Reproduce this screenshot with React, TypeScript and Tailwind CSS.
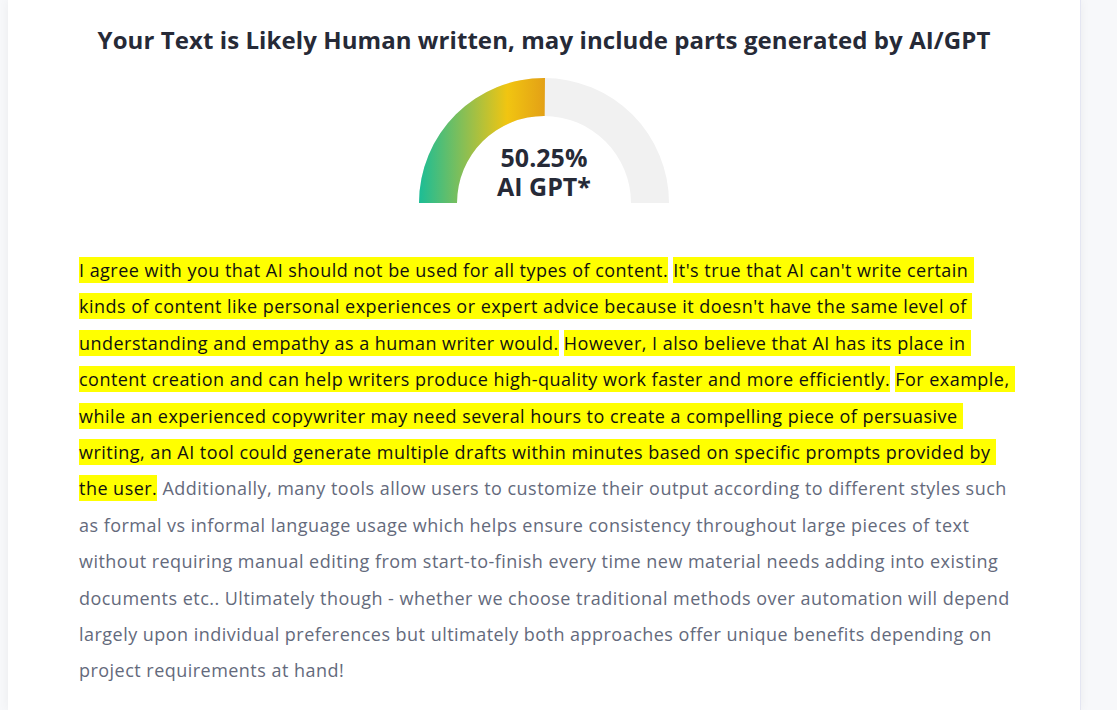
import React from "react";

const H = ({ children }: { children: React.ReactNode }) => (
  <span className="bg-[#ffff00] text-[#111111] py-[1px]">{children}</span>
);

function Gauge() {
  const cx = 125;
  const cy = 126;
  const R = 125;
  const r = 87;
  const pct = 0.5025;
  const ang = Math.PI * (1 - pct);
  const ex = cx + R * Math.cos(ang);
  const ey = cy - R * Math.sin(ang);
  const ix = cx + r * Math.cos(ang);
  const iy = cy - r * Math.sin(ang);
  const bg = `M ${cx - R} ${cy} A ${R} ${R} 0 0 1 ${cx + R} ${cy} L ${cx + r} ${cy} A ${r} ${r} 0 0 0 ${cx - r} ${cy} Z`;
  const fg = `M ${cx - R} ${cy} A ${R} ${R} 0 0 1 ${ex} ${ey} L ${ix} ${iy} A ${r} ${r} 0 0 0 ${cx - r} ${cy} Z`;
  return (
    <div className="relative w-[250px] h-[126px]">
      <svg width="250" height="126" viewBox="0 0 250 126" className="block">
        <defs>
          <linearGradient id="g" x1="0" y1="0" x2="126" y2="0" gradientUnits="userSpaceOnUse">
            <stop offset="0" stopColor="#1bbd96" />
            <stop offset="0.4" stopColor="#96bf4c" />
            <stop offset="0.7" stopColor="#f1c511" />
            <stop offset="1" stopColor="#e3a016" />
          </linearGradient>
        </defs>
        <path d={bg} fill="#f1f1f1" />
        <path d={fg} fill="url(#g)" />
      </svg>
      <div className="absolute left-0 right-0 top-[66px] flex flex-col items-center text-[25px] font-bold text-[#262a37]">
        <div className="h-[29px] leading-[29px]">50.25%</div>
        <div className="h-[29px] leading-[29px]">AI GPT*</div>
      </div>
    </div>
  );
}

export default function App() {
  return (
    <div
      className="min-h-[710px] w-full bg-[#f7f8fa] flex"
      style={{ fontFamily: '"Open Sans", "Noto Sans", sans-serif' }}
    >
      <div className="ml-[8px] w-[1073px] min-h-[710px] bg-white border-r border-[#e4e6f2] shadow-[0_0_10px_rgba(0,0,0,0.05)] flex flex-col items-center pt-[24px]">
        <h1 className="text-[24px] leading-[32px] font-bold text-[#262a37] tracking-[0.08px]">
          Your Text is Likely Human written, may include parts generated by AI/GPT
        </h1>
        <div className="mt-[21px]">
          <Gauge />
        </div>
        <p className="self-stretch mt-[49px] px-[71px] whitespace-nowrap text-[18px] leading-[36.4px] text-[#646a7c] tracking-[0.47px]">
          <H>I agree with you that AI should not be used for all types of content.</H>{" "}
          <H>It's true that AI can't write certain&nbsp;</H>
          <br />
          <H>kinds of content like personal experiences or expert advice because it doesn't have the same level of&nbsp;</H>
          <br />
          <H>understanding and empathy as a human writer would.</H>{" "}
          <H>However, I also believe that AI has its place in&nbsp;</H>
          <br />
          <H>content creation and can help writers produce high-quality work faster and more efficiently.</H>{" "}
          <H>For example,&nbsp;</H>
          <br />
          <H>while an experienced copywriter may need several hours to create a compelling piece of persuasive&nbsp;</H>
          <br />
          <H>writing, an AI tool could generate multiple drafts within minutes based on specific prompts provided by&nbsp;</H>
          <br />
          <H>the user.</H> Additionally, many tools allow users to customize their output according to different styles such
          <br />
          as formal vs informal language usage which helps ensure consistency throughout large pieces of text
          <br />
          without requiring manual editing from start-to-finish every time new material needs adding into existing
          <br />
          documents etc.. Ultimately though - whether we choose traditional methods over automation will depend
          <br />
          largely upon individual preferences but ultimately both approaches offer unique benefits depending on
          <br />
          project requirements at hand!
        </p>
      </div>
    </div>
  );
}
